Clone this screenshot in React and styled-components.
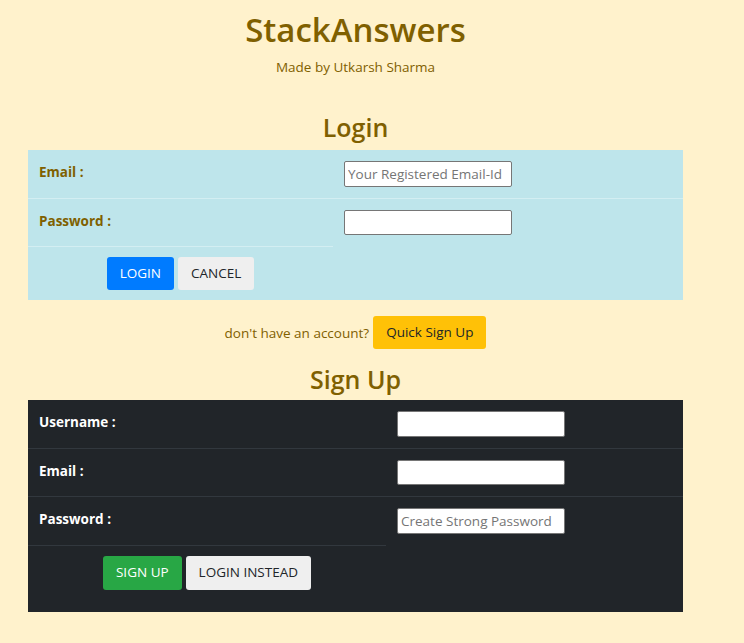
import React from 'react';
import styled, { createGlobalStyle } from 'styled-components';

const Global = createGlobalStyle`
  html, body { margin: 0; padding: 0; background: #fff2cc; }
  body {
    font-family: "Open Sans", "Noto Sans", sans-serif;
    color: #7f6000;
    font-size: 13.5px;
  }
  * { box-sizing: border-box; }
`;

const Page = styled.div`
  width: 711px;
  padding: 8px 28px 30px;
  display: flex;
  flex-direction: column;
  align-items: center;
`;

const Title = styled.h1`
  margin: 0;
  font-size: 33px;
  font-weight: 600;
  line-height: 43px;
  color: #7f6000;
`;

const Byline = styled.p`
  margin: 6px 0 0;
  font-size: 13.5px;
  line-height: 20px;
`;

const Heading = styled.h3`
  margin: ${p => p.$top}px 0 ${p => p.$bottom}px;
  font-size: 25px;
  font-weight: 600;
  line-height: 30px;
  color: #7f6000;
`;

const FormTable = styled.div`
  width: 655px;
  display: grid;
  grid-template-columns: ${p => p.$left}px 1fr;
  background: ${p => (p.$dark ? '#212529' : '#bee5eb')};
  color: ${p => (p.$dark ? '#ffffff' : '#7f6000')};
`;

const Cell = styled.div`
  padding: 11px;
  border-top: ${p => (p.$first ? 'none' : `1px solid ${p.$dark ? '#32383e' : '#d3eef2'}`)};
`;

const Label = styled(Cell)`
  font-weight: 700;
  font-size: 13.5px;
  line-height: 20px;
  padding-top: 12px;
`;

const Actions = styled(Cell)`
  padding: 10px 11px ${p => p.$bottom}px;
  display: flex;
  justify-content: center;
  gap: 4px;
`;

const Input = styled.input`
  display: block;
  width: 168px;
  height: 25.6px;
  margin: 0;
  padding: 1px 3px;
  border: 1px solid #767676;
  border-radius: 2px;
  background: #fff;
  font-family: "Open Sans", "Noto Sans", sans-serif;
  font-size: 13.5px;
  color: #222;
  &::placeholder { color: #757575; }
`;

const Button = styled.button`
  height: ${p => p.$h || 33}px;
  padding: 0 13px;
  border: none;
  border-radius: 3px;
  font-family: "Open Sans", "Noto Sans", sans-serif;
  font-size: 13.5px;
  line-height: 1;
  cursor: pointer;
  background: ${p => ({ primary: '#007bff', success: '#28a745', warning: '#ffc107', plain: '#efefef' }[p.$variant])};
  color: ${p => (p.$variant === 'primary' || p.$variant === 'success' ? '#ffffff' : '#212529')};
`;

const Prompt = styled.div`
  margin-top: 16px;
  display: flex;
  align-items: center;
  gap: 4px;
  font-size: 13.5px;
`;

const PromptText = styled.span`
  padding-top: 1px;
`;

function Row({ label, first, dark, placeholder, type = 'text' }) {
  return (
    <>
      <Label $first={first} $dark={dark}>{label}</Label>
      <Cell $first={first} $dark={dark}>
        <Input type={type} placeholder={placeholder} />
      </Cell>
    </>
  );
}

export default function App() {
  return (
    <>
      <Global />
      <Page>
        <Title>StackAnswers</Title>
        <Byline>Made by Utkarsh Sharma</Byline>

        <Heading $top={35} $bottom={8}>Login</Heading>
        <FormTable $left={305}>
          <Row first label="Email :" placeholder="Your Registered Email-Id" />
          <Row label="Password :" type="password" />
          <Actions $bottom={10}>
            <Button $variant="primary">LOGIN</Button>
            <Button $variant="plain">CANCEL</Button>
          </Actions>
        </FormTable>

        <Prompt>
          <PromptText>don't have an account?</PromptText>
          <Button $variant="warning">Quick Sign Up</Button>
        </Prompt>

        <Heading $top={15} $bottom={6}>Sign Up</Heading>
        <FormTable $left={358} $dark>
          <Row first dark label="Username :" />
          <Row dark label="Email :" />
          <Row dark label="Password :" type="password" placeholder="Create Strong Password" />
          <Actions $dark $bottom={22}>
            <Button $variant="success" $h={34}>SIGN UP</Button>
            <Button $variant="plain" $h={34}>LOGIN INSTEAD</Button>
          </Actions>
        </FormTable>
      </Page>
    </>
  );
}
